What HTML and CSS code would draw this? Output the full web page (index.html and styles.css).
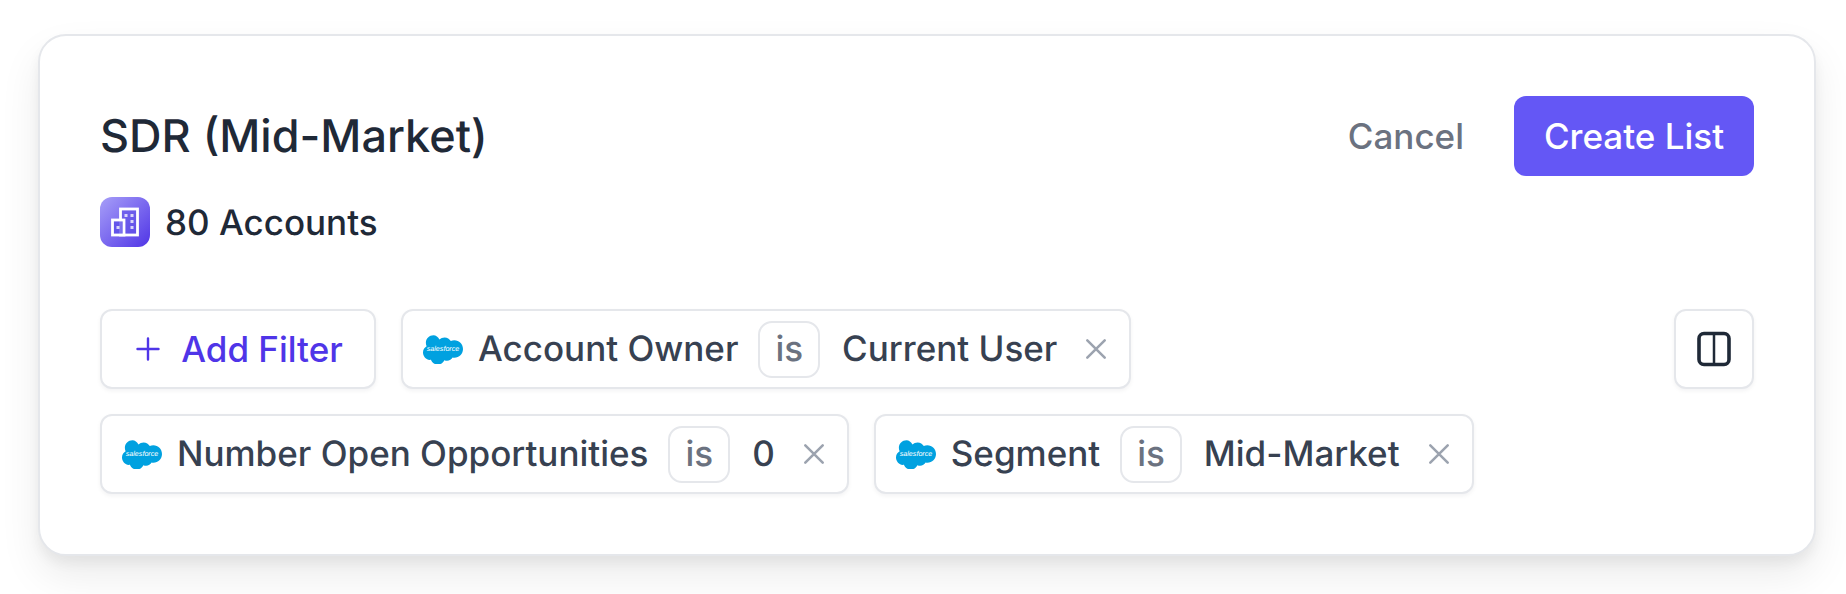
FILE: index.html
```html
<!DOCTYPE html>
<html lang="en">
<head>
<meta charset="utf-8">
<title>SDR (Mid-Market)</title>
<link rel="stylesheet" href="styles.css">
</head>
<body>
<svg class="defs" width="0" height="0" aria-hidden="true">
  <defs>
    <symbol id="sf" viewBox="0 0 42 30">
      <path fill="#00a1e0" d="M17.3 4.6c1.4-1.4 3.3-2.3 5.4-2.3 2.8 0 5.2 1.5 6.5 3.8 1.1-.5 2.4-.8 3.7-.8 5 0 9.1 4.1 9.100 9.200s-4.100 9.200-9.100 9.200c-.6 0-1.200-.1-1.800-.2-1.100 2-3.300 3.400-5.800 3.400-1 0-2-.2-2.900-.7-1.200 2.700-3.900 4.600-7 4.600-3.300 0-6.100-2.100-7.100-5-.5.100-.9.100-1.400.100C3.400 25.900 0 22.400 0 18.200c0-2.800 1.500-5.300 3.800-6.600C3.300 10.500 3 9.200 3 7.900 3 3.500 6.600 0 11 0c2.600 0 4.900 1.800 6.300 4.600z"/>
      <text x="21" y="17" class="sf-text">salesforce</text>
    </symbol>
  </defs>
</svg>
<main class="card">
  <header class="head">
    <h1 class="title">SDR (Mid-Market)</h1>
    <div class="actions">
      <button class="cancel">Cancel</button>
      <button class="create">Create List</button>
    </div>
  </header>
  <div class="count">
    <span class="count-icon">
      <svg width="30" height="30" viewBox="0 0 30 30" fill="none" stroke="#fff" stroke-width="2.800">
        <rect x="10.500" y="2" width="17" height="26" fill="#5d4fe8" fill-opacity=".55"/>
        <rect x="2.500" y="13" width="11.500" height="15" fill="#5d4fe8" fill-opacity=".8"/>
        <g fill="#fff" stroke="none" opacity=".75">
          <rect x="14.500" y="7" width="3" height="3"/><rect x="20.500" y="7" width="3" height="3"/>
          <rect x="20.500" y="13" width="3" height="3"/><rect x="20.500" y="19" width="3" height="3"/>
          <rect x="6.500" y="19" width="3" height="3"/>
        </g>
      </svg>
    </span>
    <span class="count-text">80 Accounts</span>
  </div>
  <section class="filter-area">
    <div class="filters">
      <button class="chip add">
        <svg width="24" height="24" viewBox="0 0 24 24" stroke="#4f35e8" stroke-width="2.400" stroke-linecap="round"><path d="M12 1.500v21M1.500 12h21"/></svg>
        <span>Add Filter</span>
      </button>
      <div class="chip">
        <svg class="logo"><use href="#sf"/></svg>
        <span class="field">Account Owner</span>
        <span class="op">is</span>
        <span class="value">Current User</span>
        <svg class="close" viewBox="0 0 24 24"><path d="M2.500 2.500l19 19M21.500 2.500l-19 19"/></svg>
      </div>
      <div class="chip">
        <svg class="logo"><use href="#sf"/></svg>
        <span class="field">Number Open Opportunities</span>
        <span class="op">is</span>
        <span class="value">0</span>
        <svg class="close" viewBox="0 0 24 24"><path d="M2.500 2.500l19 19M21.500 2.500l-19 19"/></svg>
      </div>
      <div class="chip">
        <svg class="logo"><use href="#sf"/></svg>
        <span class="field">Segment</span>
        <span class="op">is</span>
        <span class="value">Mid-Market</span>
        <svg class="close" viewBox="0 0 24 24"><path d="M2.500 2.500l19 19M21.500 2.500l-19 19"/></svg>
      </div>
    </div>
    <button class="chip toggle" aria-label="Toggle columns">
      <svg width="36" height="36" viewBox="0 0 36 36" fill="none" stroke="#1f2937" stroke-width="3.600"><rect x="3" y="2.500" width="30" height="31" rx="5"/><path d="M18 2v32" stroke-width="2.500"/></svg>
    </button>
  </section>
</main>
</body>
</html>
```
FILE: styles.css
```css
* { box-sizing: border-box; }
html, body { margin: 0; background: #fff; }
body {
  height: 594px;
  overflow: hidden;
  padding: 34px 30px 0 38px;
  font-family: Inter, "Liberation Sans", sans-serif;
  text-rendering: geometricPrecision;
}
button { font: inherit; cursor: pointer; }
.defs { position: absolute; }
.card {
  width: 1778px;
  height: 522px;
  padding: 60px;
  background: #fff;
  border: 2px solid #e5e7eb;
  border-radius: 28px;
  box-shadow: 0 20px 40px rgba(0, 0, 0, .08), 0 8px 12px rgba(0, 0, 0, .05);
}
.head {
  display: flex;
  align-items: center;
  justify-content: space-between;
  height: 80px;
}
.title {
  margin: 0;
  font-size: 45px;
  font-weight: 500;
  line-height: 48px;
  color: #1f2937;
}
.actions { display: flex; align-items: center; gap: 50px; }
.cancel {
  padding: 0;
  border: 0;
  background: none;
  font-size: 35px;
  font-weight: 500;
  color: #6b7280;
}
.create {
  width: 240px;
  height: 80px;
  border: 0;
  border-radius: 12px;
  background: #6457f5;
  color: #fff;
  font-size: 35px;
  font-weight: 500;
}
.count {
  display: flex;
  align-items: center;
  gap: 15px;
  margin-top: 21px;
}
.count-icon {
  display: flex;
  align-items: center;
  justify-content: center;
  width: 50px;
  height: 50px;
  border-radius: 12px;
  background: linear-gradient(135deg, #a79ff8, #5035e6);
}
.count-text {
  padding-top: 1px;
  font-size: 35px;
  font-weight: 500;
  color: #1f2937;
}
.filter-area {
  display: flex;
  align-items: flex-start;
  justify-content: space-between;
  margin-top: 62px;
}
.filters {
  display: flex;
  flex-wrap: wrap;
  gap: 25px;
  width: 1500px;
}
.chip {
  display: flex;
  align-items: center;
  height: 80px;
  padding: 0 22px 0 20px;
  background: #fff;
  border: 2px solid #e5e7eb;
  border-radius: 12px;
  box-shadow: 0 2px 4px rgba(17, 24, 39, .05);
  font-size: 35px;
  font-weight: 500;
  color: #374151;
}
.add {
  gap: 21px;
  width: 276px;
  justify-content: center;
  padding: 0 0 0 3px;
  color: #4f35e8;
}
.logo { width: 40px; height: 29px; margin-right: 15px; }
.sf-text {
  fill: #fff;
  font-family: "Liberation Sans", sans-serif;
  font-size: 7.500px;
  font-style: italic;
  text-anchor: middle;
}
.op {
  display: flex;
  align-items: center;
  height: 57px;
  margin: 0 22px 0 20px;
  padding: 0 15px;
  border: 2px solid #e5e7eb;
  border-radius: 14px;
  color: #6b7280;
}
.value { margin-right: 28px; }
.close {
  width: 22px;
  height: 22px;
  fill: none;
  stroke: #9ca3af;
  stroke-width: 2.800;
  stroke-linecap: round;
}
.toggle {
  justify-content: center;
  width: 80px;
  padding: 0;
}
```
